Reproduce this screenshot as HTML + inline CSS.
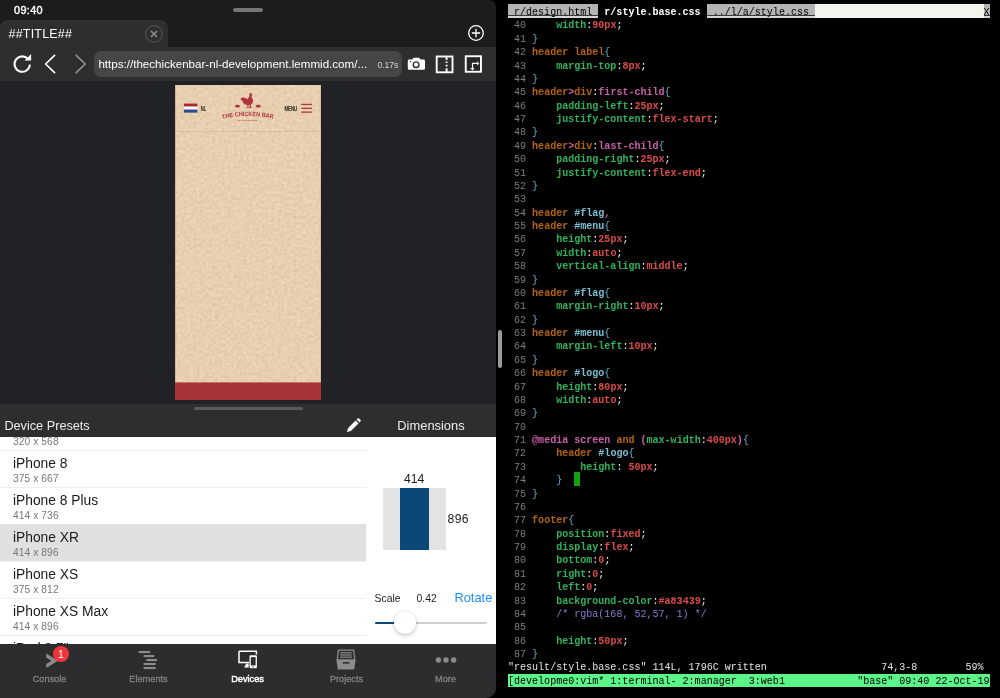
<!DOCTYPE html>
<html><head><meta charset="utf-8"><title>##TITLE##</title>
<style>
*{box-sizing:border-box;margin:0;padding:0}
html,body{width:1000px;height:698px;overflow:hidden;background:#000}
body{position:relative;font-family:"Liberation Sans",sans-serif;color:#fff}
.abs{position:absolute}
#left{will-change:transform;position:absolute;left:0;top:0;width:496px;height:698px;background:#1c1c1e;border-radius:0 7px 10px 0;overflow:hidden}
#divider{position:absolute;left:498px;top:330px;width:4px;height:38px;border-radius:2px;background:#9b9b9b}
/* terminal */
#term{will-change:transform;position:absolute;left:508px;top:4.325px;width:482px;font-family:"Liberation Mono",monospace;font-size:10.04px;line-height:13.375px;color:#d4d4d4}
#term div{height:13.375px;line-height:18.775px;white-space:pre}
#term div span.t1,#term div span.t2,#term div span.tf,#term div span.cur{display:inline-block;height:13.375px;vertical-align:top}
#term div.tabline span{height:13.7px}
.ln{color:#7c7c7c}
.s{color:#b5630a;font-weight:bold}
.p{color:#2eb45c;font-weight:bold}
.v{color:#dc4a4a;font-weight:bold}
.b{color:#58abca}
.i{color:#7cc0d3;font-weight:bold}
.k{color:#c95fab;font-weight:bold}
.c{color:#8a79d2}
.w{color:#f2f2f2}
.k2{color:#c95fab;font-weight:bold}
.cur{background:#13a10e}
.tabline{color:#000}
.t1{background:linear-gradient(#b4b4b4 0,#b4b4b4 11.3px,#3a3a3a 11.3px,#3a3a3a 12px,#d6d6d6 12px);color:#000}
.t2{background:#000;color:#fff;font-weight:bold}
.tf{background:#f4f4ee}
.msg{color:#e4e4e4}
#term div.tmux{background:linear-gradient(transparent 0,transparent .8px,#5cf58a .8px);color:#000;height:14px}
#clock{left:14px;top:3px;font-size:10.9px;-webkit-text-stroke:.4px #fff;letter-spacing:.35px;line-height:14px;color:#fff}
#grab{left:233px;top:8px;width:30px;height:4px;border-radius:2px;background:#77777a}
#tab{left:0;top:20px;width:168px;height:28px;background:#2e2e30;border-radius:8px 8px 0 0}
#tabtitle{position:absolute;left:8.6px;top:5.6px;font-size:12.5px;letter-spacing:.18px;line-height:16px;color:#fff}
#tabclose{position:absolute;left:143.8px;top:3.5px}
#toolbar{left:0;top:47px;width:496px;height:34px;background:#2e2e30}
#url{left:94px;top:4px;width:308px;height:26px;border-radius:7px;background:#464648}
#urltext{position:absolute;left:4.4px;top:5px;font-size:11.6px;line-height:16px;color:#fff;white-space:nowrap}
#urltime{position:absolute;left:283.4px;top:6.5px;font-size:8.6px;line-height:14px;color:#d6d6d6}
#page{left:175px;top:85px;width:146px;height:315px;overflow:hidden}
#grab2{left:193.5px;top:406.8px;width:109px;height:3.4px;border-radius:2px;background:#5a5a5c;z-index:3}
#phead{left:0;top:404px;width:496px;height:33px;background:#2e2e30}
#dp{left:4.4px;top:12.8px;font-size:12.7px;line-height:18px;color:#ececec;white-space:nowrap}
#dim{left:397.3px;top:12.8px;font-size:12.9px;line-height:18px;color:#ececec;white-space:nowrap}
#list{left:0;top:437px;width:366px;height:207px;background:#fff;overflow:hidden}
.row{position:absolute;left:0;width:366px;height:37px;border-top:1px solid #efefef}
.row.sel{background:#e0e0e0;border-top-color:#e0e0e0}
.row .t{position:absolute;left:13px;top:4.3px;font-size:13.8px;line-height:17px;color:#1a1a1a;white-space:nowrap}
.row .d{position:absolute;left:13px;top:21.9px;font-size:10.2px;line-height:12px;color:#777;white-space:nowrap;letter-spacing:.1px}
#dims{left:366px;top:437px;width:130px;height:207px;background:#fff;color:#1a1a1a}
#w414{left:38px;top:34px;font-size:12.2px;line-height:16px}
#gbox{left:17px;top:50.5px;width:62.5px;height:62px;background:#e3e3e3}
#bbox{left:33.5px;top:50.5px;width:29.5px;height:62px;background:#0a4878}
#h896{left:81.6px;top:74.4px;font-size:12.2px;line-height:16px;letter-spacing:.35px}
#scl{left:8.6px;top:154.7px;font-size:10.4px;line-height:14px;color:#222}
#sclv{left:50.6px;top:154.7px;font-size:10.4px;line-height:14px;color:#222}
#rot{left:88.4px;top:152px;font-size:12.9px;line-height:18px;color:#1a8cff}
#track{left:8.6px;top:185px;width:112.4px;height:2px;border-radius:1px;background:#cfcfd2}
#trackf{left:8.6px;top:185px;width:30px;height:2px;border-radius:1px;background:#0a4878}
#thumb{left:27.6px;top:174.4px;width:22.4px;height:22.4px;border-radius:50%;background:#fff;box-shadow:0 1.5px 4px rgba(0,0,0,.22),0 0 0 .5px rgba(0,0,0,.06)}
#tabbar{left:0;top:644px;width:496px;height:54px;background:#2d2d2f}
.tb{position:absolute;top:0;width:99px;height:54px}
.tb .ic{position:absolute;left:34px;top:3.6px}
.tb .lb{position:absolute;left:0;width:99px;top:29px;text-align:center;font-size:9.2px;line-height:12px;color:#828284;-webkit-text-stroke:.3px #828284}
.tb.on .lb{color:#fff;-webkit-text-stroke:.45px #fff}
.badge{position:absolute;left:53px;top:2px;width:16px;height:16px;border-radius:8px;background:#f0353b;color:#fff;font-size:10.5px;line-height:16px;text-align:center}
</style></head><body>
<div id="left">
  <!-- status bar -->
  <div class="abs" id="clock">09:40</div>
  <div class="abs" id="grab"></div>
  <!-- tab strip -->
  <div class="abs" id="tab"><span id="tabtitle">##TITLE##</span>
    <svg id="tabclose" width="20" height="20" viewBox="0 0 20 20"><circle cx="10" cy="10" r="8.3" fill="none" stroke="#58585a" stroke-width="1"/><path d="M7 7 L13 13 M13 7 L7 13" stroke="#8b8b8d" stroke-width="1.7"/></svg>
  </div>
  <svg class="abs" id="plus" width="20" height="20" viewBox="0 0 20 20" style="left:465.7px;top:23.4px"><circle cx="10" cy="10" r="7.3" fill="none" stroke="#fff" stroke-width="1.3"/><path d="M10 5.8 V14.2 M5.8 10 H14.2" stroke="#fff" stroke-width="1.3"/></svg>
  <!-- toolbar -->
  <div class="abs" id="toolbar">
    <svg class="abs" style="left:11.2px;top:5.4px" width="23" height="23" viewBox="0 0 24 24"><path d="M17.6 7.2 A8 8 0 1 0 19.6 14" fill="none" stroke="#fff" stroke-width="2.2" stroke-linecap="round"/><path d="M14.2 8.9 L21 8.9 L21 2.2 Z" fill="#fff"/></svg>
    <svg class="abs" style="left:42px;top:5px" width="16" height="24" viewBox="0 0 16 24"><path d="M12.6 3.4 L3.6 12 L12.6 20.6" fill="none" stroke="#fff" stroke-width="1.7" stroke-linecap="round" stroke-linejoin="round"/></svg>
    <svg class="abs" style="left:72px;top:5px" width="16" height="24" viewBox="0 0 16 24"><path d="M4.2 3.4 L13.2 12 L4.2 20.6" fill="none" stroke="#8f8f91" stroke-width="1.7" stroke-linecap="round" stroke-linejoin="round"/></svg>
    <div class="abs" id="url"><span id="urltext">https://thechickenbar-nl-development.lemmid.com/...</span><span id="urltime">0.17s</span></div>
    <!-- camera -->
    <svg class="abs" style="left:407px;top:10px" width="19" height="14" viewBox="0 0 19 14"><path d="M2.2 2.6 H5.2 L6.6 0.8 H12.2 L13.6 2.6 H16.6 Q18 2.6 18 4 V11.4 Q18 12.8 16.6 12.8 H2.2 Q0.8 12.8 0.8 11.4 V4 Q0.8 2.6 2.2 2.6 Z" fill="#fff"/><circle cx="9.1" cy="7.7" r="3.5" fill="#2e2e30"/><circle cx="9.1" cy="7.7" r="2.1" fill="#fff"/><circle cx="3.4" cy="4.6" r=".7" fill="#2e2e30"/></svg>
    <!-- split -->
    <svg class="abs" style="left:435px;top:8px" width="19" height="19" viewBox="0 0 19 19"><rect x="1.7" y="1.5" width="15.8" height="15.8" fill="none" stroke="#fff" stroke-width="1.9"/><path d="M11.6 2 V5 M11.6 6.5 V8.1 M11.6 9.8 V11.5 M11.6 13.2 V17" stroke="#fff" stroke-width="1.9"/></svg>
    <!-- rotate -->
    <svg class="abs" style="left:464px;top:8px" width="19" height="19" viewBox="0 0 19 19"><rect x="1.75" y="1.25" width="15.2" height="15.5" fill="#262628" stroke="#fff" stroke-width="1.9"/><path d="M8.5 13.4 V8.4 H13.4" fill="none" stroke="#fff" stroke-width="1.15"/><path d="M13.1 6.2 L15.2 8.4 L13.1 10.6 Z" fill="#fff"/><path d="M6.2 13.1 L8.5 15.4 L10.7 13.1 Z" fill="#fff"/></svg>
  </div>
  <div class="abs" style="left:0;top:81px;width:496px;height:323px;background:#212226"></div>
  <!-- page preview -->
  <div class="abs" id="page">
    <svg class="abs" style="left:0;top:0" width="146" height="315" viewBox="0 0 146 315">
      <defs><filter id="paper" x="0" y="0" width="100%" height="100%" color-interpolation-filters="sRGB"><feTurbulence type="fractalNoise" baseFrequency="0.32" numOctaves="4" seed="11"/><feColorMatrix type="matrix" values="0.12 0 0 0 0.846  0.12 0 0 0 0.752  0.12 0 0 0 0.626  0 0 0 0 1"/></filter></defs>
      <rect width="146" height="315" fill="#e7cfaf"/>
      <rect width="146" height="315" filter="url(#paper)"/>
      <rect x="0" y="0" width="0.8" height="315" fill="#b89c78" opacity=".55"/><rect x="145.2" y="0" width="0.8" height="315" fill="#b89c78" opacity=".35"/>
      <rect x="0" y="46" width="146" height="0.8" fill="#b79f7d" opacity=".38"/>
      <!-- flag -->
      <rect x="9" y="18.6" width="13.4" height="3" fill="#ae2531"/><rect x="9" y="21.6" width="13.4" height="3" fill="#fbfbfb"/><rect x="9" y="24.6" width="13.4" height="3" fill="#2a4a93"/>
      <text x="25.8" y="25.7" font-family="Liberation Sans, sans-serif" font-weight="bold" font-size="6.4" textLength="5.4" lengthAdjust="spacingAndGlyphs" fill="#1b1b1b">NL</text>
      <text x="109.4" y="25.8" font-family="Liberation Sans, sans-serif" font-weight="bold" font-size="6.4" textLength="12.8" lengthAdjust="spacingAndGlyphs" fill="#1b1b1b">MENU</text>
      <rect x="126.2" y="18.8" width="10.8" height="1.3" fill="#b03a44"/><rect x="126.2" y="22.7" width="10.8" height="1.3" fill="#b03a44"/><rect x="126.2" y="26.5" width="10.8" height="1.3" fill="#b03a44"/>
      <!-- rooster -->
      <g transform="translate(50,3) scale(0.05302)" fill="#b2323e">
        <path d="M518 128 L504 118 Q506 98 490 96 Q480 86 470 97 Q457 104 462 122 Q464 140 458 156 Q450 186 420 211 Q404 197 384 188 Q350 175 318 186 Q298 194 286 221 Q302 214 314 226 Q326 240 334 260 Q342 284 366 300 Q392 316 422 320 L424 362 L402 368 L402 375 L448 375 L444 364 L440 322 L464 322 L466 362 L452 368 L452 375 L498 375 L494 364 L484 320 Q512 300 526 268 Q534 232 520 204 Q504 182 499 160 Q499 150 507 141 Z"/>
        <ellipse cx="235" cy="343" rx="48" ry="25"/><ellipse cx="628" cy="343" rx="48" ry="25"/>
      </g>
      <path id="arc" d="M47.6 33.9 Q73 27.9 98.4 33.9" fill="none"/>
      <text font-family="Liberation Sans, sans-serif" font-weight="bold" font-size="6.2" fill="#b2323e"><textPath href="#arc" startOffset="0" textLength="51" lengthAdjust="spacingAndGlyphs">THE CHICKEN BAR</textPath></text>
      <text x="73" y="35.6" text-anchor="middle" font-family="Liberation Sans, sans-serif" font-weight="bold" font-size="2.5" fill="#b2323e" letter-spacing="0.42">· ROTISSERIE ·</text>
      <rect x="0" y="297.4" width="146" height="17.6" fill="#a83439"/>
    </svg>
  </div>
  <div class="abs" id="grab2"></div>
  <!-- panel header -->
  <div class="abs" id="phead">
    <span class="abs" id="dp">Device Presets</span>
    <svg class="abs" style="left:345px;top:13px" width="17" height="17" viewBox="0 0 17 17"><path d="M2 15 L2.9 11.2 L10.6 3.5 L13.5 6.4 L5.8 14.1 Z M11.5 2.6 L12.6 1.5 Q13.4 0.9 14.2 1.6 L15.4 2.8 Q16.1 3.6 15.5 4.4 L14.4 5.5 Z" fill="#fff"/></svg>
    <span class="abs" id="dim">Dimensions</span>
  </div>
  <!-- list -->
  <div class="abs" id="list">
    <div class="row" style="top:-24px"><div class="t">iPhone SE</div><div class="d">320 x 568</div></div>
    <div class="row" style="top:13px"><div class="t">iPhone 8</div><div class="d">375 x 667</div></div>
    <div class="row" style="top:50px"><div class="t">iPhone 8 Plus</div><div class="d">414 x 736</div></div>
    <div class="row sel" style="top:87px"><div class="t">iPhone XR</div><div class="d">414 x 896</div></div>
    <div class="row" style="top:124px"><div class="t">iPhone XS</div><div class="d">375 x 812</div></div>
    <div class="row" style="top:161px"><div class="t">iPhone XS Max</div><div class="d">414 x 896</div></div>
    <div class="row" style="top:198px"><div class="t" style="top:3.6px">iPad 9.7"</div><div class="d">768 x 1024</div></div>
  </div>
  <!-- dimensions panel -->
  <div class="abs" id="dims">
    <div class="abs" id="w414">414</div>
    <div class="abs" id="gbox"></div><div class="abs" id="bbox"></div>
    <div class="abs" id="h896">896</div>
    <div class="abs" id="scl">Scale</div><div class="abs" id="sclv">0.42</div><div class="abs" id="rot">Rotate</div>
    <div class="abs" id="track"></div><div class="abs" id="trackf"></div><div class="abs" id="thumb"></div>
  </div>
  <!-- bottom tab bar -->
  <div class="abs" id="tabbar">
    <div class="tb" style="left:0"><svg width="30" height="24" viewBox="0 0 30 24" class="ic"><path d="M12.2 5.4 L24 12.7 L12.2 20 L12.2 16 L17.4 12.7 L12.2 9.4 Z" fill="#8c8c8e"/></svg><span class="badge">1</span><span class="lb">Console</span></div>
    <div class="tb" style="left:99px"><svg width="30" height="24" viewBox="0 0 30 24" class="ic"><g fill="#8c8c8e"><rect x="5.6" y="3" width="11.6" height="2.1"/><rect x="10.6" y="7" width="10.6" height="2.1"/><rect x="13.4" y="11" width="10.6" height="2.1"/><rect x="10.6" y="15" width="12" height="2.1"/><rect x="10.6" y="19" width="12" height="2.1"/></g></svg><span class="lb">Elements</span></div>
    <div class="tb on" style="left:198px"><svg width="30" height="24" viewBox="0 0 30 24" class="ic" style="left:35px;top:4.4px"><path d="M6 3.2 H23.4 V6.6 M16 14.6 H6 V3.2" fill="none" stroke="#fff" stroke-width="1.5"/><path d="M11.2 19.4 L13.2 15.6 H15.6 V19.4 Z" fill="#fff"/><rect x="16.5" y="7.2" width="7.4" height="13" rx="1.3" fill="#fff"/><rect x="17.8" y="9.2" width="4.8" height="8.2" fill="#2d2d2f"/><circle cx="20.2" cy="18.9" r=".7" fill="#2d2d2f"/></svg><span class="lb">Devices</span></div>
    <div class="tb" style="left:297px"><svg width="30" height="24" viewBox="0 0 30 24" class="ic"><path d="M7.4 2.2 H22.6 L23.8 12 H6.2 Z" fill="none" stroke="#8c8c8e" stroke-width="1.3"/><g fill="#8c8c8e"><rect x="9.4" y="4.2" width="11.2" height="1.2"/><rect x="9.2" y="6.4" width="11.6" height="1.2"/><rect x="9" y="8.6" width="12" height="1.2"/><path d="M5.4 12 H24.6 L23.2 21.4 H6.8 Z"/></g><rect x="11.6" y="14" width="6.8" height="1.6" fill="#2d2d2f"/></svg><span class="lb">Projects</span></div>
    <div class="tb" style="left:396px"><svg width="30" height="24" viewBox="0 0 30 24" class="ic"><g fill="#8c8c8e"><circle cx="8.4" cy="12" r="2.7"/><circle cx="16" cy="12" r="2.7"/><circle cx="23.6" cy="12" r="2.7"/></g></svg><span class="lb">More</span></div>
  </div>
</div>

<div id="divider"></div>
<div id="term">
<div class="tabline"><span class="t1"> r/design.html </span><span class="t2"> r/style.base.css </span><span class="t1"> ../l/a/style.css </span><span class="tf">                            </span><span class="t1">X</span></div>
<div><span class="ln"> 40 </span>    <span class="p">width</span><span class="w">:</span><span class="v">90px</span><span class="w">;</span></div>
<div><span class="ln"> 41 </span><span class="b">}</span></div>
<div><span class="ln"> 42 </span><span class="s">header</span> <span class="s">label</span><span class="b">{</span></div>
<div><span class="ln"> 43 </span>    <span class="p">margin-top</span><span class="w">:</span><span class="v">8px</span><span class="w">;</span></div>
<div><span class="ln"> 44 </span><span class="b">}</span></div>
<div><span class="ln"> 45 </span><span class="s">header</span><span class="k2">&gt;</span><span class="s">div</span><span class="w">:</span><span class="k2">first-child</span><span class="b">{</span></div>
<div><span class="ln"> 46 </span>    <span class="p">padding-left</span><span class="w">:</span><span class="v">25px</span><span class="w">;</span></div>
<div><span class="ln"> 47 </span>    <span class="p">justify-content</span><span class="w">:</span><span class="v">flex-start</span><span class="w">;</span></div>
<div><span class="ln"> 48 </span><span class="b">}</span></div>
<div><span class="ln"> 49 </span><span class="s">header</span><span class="k2">&gt;</span><span class="s">div</span><span class="w">:</span><span class="k2">last-child</span><span class="b">{</span></div>
<div><span class="ln"> 50 </span>    <span class="p">padding-right</span><span class="w">:</span><span class="v">25px</span><span class="w">;</span></div>
<div><span class="ln"> 51 </span>    <span class="p">justify-content</span><span class="w">:</span><span class="v">flex-end</span><span class="w">;</span></div>
<div><span class="ln"> 52 </span><span class="b">}</span></div>
<div><span class="ln"> 53 </span></div>
<div><span class="ln"> 54 </span><span class="s">header</span> <span class="i">#flag</span><span class="k2">,</span></div>
<div><span class="ln"> 55 </span><span class="s">header</span> <span class="i">#menu</span><span class="b">{</span></div>
<div><span class="ln"> 56 </span>    <span class="p">height</span><span class="w">:</span><span class="v">25px</span><span class="w">;</span></div>
<div><span class="ln"> 57 </span>    <span class="p">width</span><span class="w">:</span><span class="v">auto</span><span class="w">;</span></div>
<div><span class="ln"> 58 </span>    <span class="p">vertical-align</span><span class="w">:</span><span class="v">middle</span><span class="w">;</span></div>
<div><span class="ln"> 59 </span><span class="b">}</span></div>
<div><span class="ln"> 60 </span><span class="s">header</span> <span class="i">#flag</span><span class="b">{</span></div>
<div><span class="ln"> 61 </span>    <span class="p">margin-right</span><span class="w">:</span><span class="v">10px</span><span class="w">;</span></div>
<div><span class="ln"> 62 </span><span class="b">}</span></div>
<div><span class="ln"> 63 </span><span class="s">header</span> <span class="i">#menu</span><span class="b">{</span></div>
<div><span class="ln"> 64 </span>    <span class="p">margin-left</span><span class="w">:</span><span class="v">10px</span><span class="w">;</span></div>
<div><span class="ln"> 65 </span><span class="b">}</span></div>
<div><span class="ln"> 66 </span><span class="s">header</span> <span class="i">#logo</span><span class="b">{</span></div>
<div><span class="ln"> 67 </span>    <span class="p">height</span><span class="w">:</span><span class="v">80px</span><span class="w">;</span></div>
<div><span class="ln"> 68 </span>    <span class="p">width</span><span class="w">:</span><span class="v">auto</span><span class="w">;</span></div>
<div><span class="ln"> 69 </span><span class="b">}</span></div>
<div><span class="ln"> 70 </span></div>
<div><span class="ln"> 71 </span><span class="k">@media</span> <span class="k2">screen</span> <span class="s">and</span> <span class="k2">(</span><span class="p">max-width</span><span class="w">:</span><span class="v">400px</span><span class="k2">)</span><span class="b">{</span></div>
<div><span class="ln"> 72 </span>    <span class="s">header</span> <span class="i">#logo</span><span class="b">{</span></div>
<div><span class="ln"> 73 </span>        <span class="p">height</span><span class="w">:</span> <span class="v">50px</span><span class="w">;</span></div>
<div><span class="ln"> 74 </span>    <span class="b">}</span>  <span class="cur"> </span></div>
<div><span class="ln"> 75 </span><span class="b">}</span></div>
<div><span class="ln"> 76 </span></div>
<div><span class="ln"> 77 </span><span class="s">footer</span><span class="b">{</span></div>
<div><span class="ln"> 78 </span>    <span class="p">position</span><span class="w">:</span><span class="v">fixed</span><span class="w">;</span></div>
<div><span class="ln"> 79 </span>    <span class="p">display</span><span class="w">:</span><span class="v">flex</span><span class="w">;</span></div>
<div><span class="ln"> 80 </span>    <span class="p">bottom</span><span class="w">:</span><span class="v">0</span><span class="w">;</span></div>
<div><span class="ln"> 81 </span>    <span class="p">right</span><span class="w">:</span><span class="v">0</span><span class="w">;</span></div>
<div><span class="ln"> 82 </span>    <span class="p">left</span><span class="w">:</span><span class="v">0</span><span class="w">;</span></div>
<div><span class="ln"> 83 </span>    <span class="p">background-color</span><span class="w">:</span><span class="v">#a83439</span><span class="w">;</span></div>
<div><span class="ln"> 84 </span>    <span class="c">/* rgba(168, 52,57, 1) */</span></div>
<div><span class="ln"> 85 </span></div>
<div><span class="ln"> 86 </span>    <span class="p">height</span><span class="w">:</span><span class="v">50px</span><span class="w">;</span></div>
<div><span class="ln"> 87 </span><span class="b">}</span></div>
<div class="msg">&quot;result/style.base.css&quot; 114L, 1796C written                   74,3-8        59%</div>
<div class="tmux">[developme0:vim* 1:terminal- 2:manager  3:web1            &quot;base&quot; 09:40 22-Oct-19</div>
</div>
</body></html>
